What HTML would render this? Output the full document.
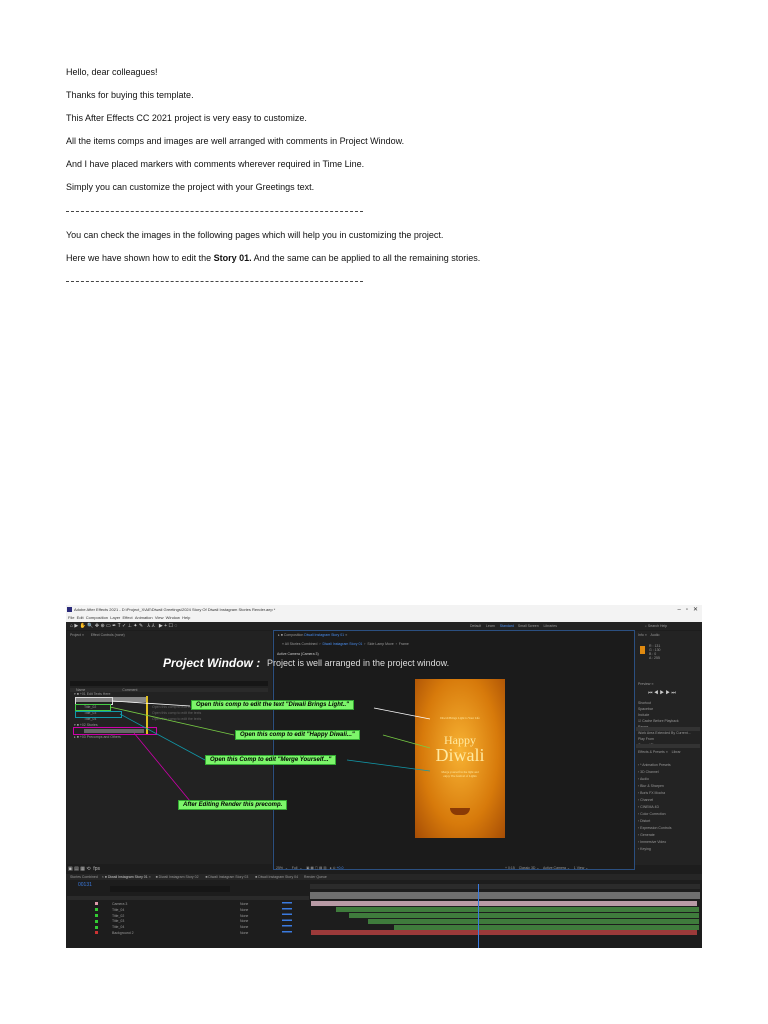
<!DOCTYPE html>
<html><head><meta charset="utf-8"><style>
body{margin:0;width:768px;height:1024px;background:#fff;position:relative;overflow:hidden;font-family:"Liberation Sans",sans-serif}
.t{position:absolute;left:66px;font-size:9px;color:#111;white-space:nowrap}
.a{position:absolute}
.s{position:absolute;font-size:3.5px;color:#999;white-space:nowrap}
.g{position:absolute;background:#7cf56a;border:1px solid #3a3;color:#000;font-size:6px;font-style:italic;font-weight:bold;white-space:nowrap;padding:1px 4px}
</style></head><body>
<div class="t" style="top:67px">Hello, dear colleagues!</div>
<div class="t" style="top:90px">Thanks for buying this template.</div>
<div class="t" style="top:113px">This After Effects CC 2021 project is very easy to customize.</div>
<div class="t" style="top:136px">All the items comps and images are well arranged with comments in Project Window.</div>
<div class="t" style="top:159px">And I have placed markers with comments wherever required in Time Line.</div>
<div class="t" style="top:182px">Simply you can customize the project with your Greetings text.</div>
<div class="a" style="left:66px;top:211px;width:297px;border-top:1px dashed #444"></div>
<div class="t" style="top:230px">You can check the images in the following pages which will help you in customizing the project.</div>
<div class="t" style="top:253px">Here we have shown how to edit the <b>Story 01.</b> And the same can be applied to all the remaining stories.</div>
<div class="a" style="left:66px;top:281px;width:297px;border-top:1px dashed #444"></div>

<div class="a" style="left:66px;top:605px;width:636px;height:17px;background:#f3f3f3;font-size:4px;color:#333">
 <div class="a" style="left:1px;top:2px;width:5px;height:5px;background:#2a2a7a"></div>
 <div class="a" style="left:8px;top:2px">Adobe After Effects 2021 - D:\Project_X\AE\Diwali Greetings\2024 Story Of Diwali Instagram Stories Render.aep *</div>
 <div class="a" style="left:2px;top:10px">File &nbsp;Edit &nbsp;Composition &nbsp;Layer &nbsp;Effect &nbsp;Animation &nbsp;View &nbsp;Window &nbsp;Help</div>
 <div class="a" style="right:4px;top:1px;font-size:6px">–&nbsp;&nbsp; ▫ &nbsp;&nbsp;✕</div>
</div>
<div class="a" style="left:66px;top:622px;width:636px;height:326px;background:#1d1d1d"></div>
<div class="a" style="left:66px;top:622px;width:636px;height:8px;background:#232323"></div>
<div class="s" style="left:70px;top:623px;font-size:5px;color:#ccc">⌂ ▶ ✋ 🔍 ✥ ⊕ ▭ ✒ T ✓ ⊥ ✦ ✎ &nbsp; ⅄ ⅄ &nbsp; ▶ + ☐ ◌</div>
<div class="s" style="left:470px;top:624px">Default &nbsp;&nbsp;&nbsp; Learn &nbsp;&nbsp;&nbsp; <span style="color:#4a8ef0">Standard</span> &nbsp;&nbsp; Small Screen &nbsp;&nbsp;&nbsp; Libraries</div>
<div class="s" style="left:645px;top:624px">⌕ Search Help</div>
<div class="a" style="left:67px;top:631px;width:205px;height:233px;background:#222"></div>
<div class="s" style="left:70px;top:633px">Project ≡ &nbsp;&nbsp;&nbsp;&nbsp;&nbsp; Effect Controls (none)</div>
<div class="a" style="left:70px;top:681px;width:198px;height:5px;background:#161616"></div>
<div class="a" style="left:70px;top:688px;width:198px;height:4px;background:#2a2a2a"></div>
<div class="s" style="left:76px;top:688px">Name &nbsp;&nbsp;&nbsp;&nbsp;&nbsp;&nbsp;&nbsp;&nbsp;&nbsp;&nbsp;&nbsp;&nbsp;&nbsp;&nbsp;&nbsp;&nbsp;&nbsp;&nbsp;&nbsp;&nbsp;&nbsp;&nbsp;&nbsp;&nbsp;&nbsp;&nbsp;&nbsp;&nbsp;&nbsp;&nbsp;&nbsp;&nbsp;&nbsp;&nbsp;&nbsp;&nbsp; Comment</div>
<div class="s" style="left:74px;top:692px">▾ ■ +01 Edit Texts Here</div>
<div class="a" style="left:76px;top:697px;width:70px;height:5px;background:#888"></div>
<div class="s" style="left:84px;top:705px">Title_02</div>
<div class="s" style="left:84px;top:711px">Title_03</div>
<div class="s" style="left:84px;top:717px">Title_04</div>
<div class="s" style="left:74px;top:723px">▾ ■ +02 Stories</div>
<div class="a" style="left:84px;top:729px;width:60px;height:4px;background:#666"></div>
<div class="s" style="left:74px;top:735px">▸ ■ +03 Precomps and Others</div>
<div class="s" style="left:152px;top:705px;color:#666">Open this comp to edit the texts</div>
<div class="s" style="left:152px;top:711px;color:#666">Open this comp to edit the texts</div>
<div class="s" style="left:152px;top:717px;color:#666">Open this comp to edit the texts</div>
<div class="a" style="left:75px;top:697px;width:36px;height:6px;border:1px solid #ddd"></div>
<div class="a" style="left:75px;top:704px;width:34px;height:5px;border:1px solid #4c4"></div>
<div class="a" style="left:75px;top:711px;width:45px;height:5px;border:1px solid #19a"></div>
<div class="a" style="left:73px;top:727px;width:82px;height:6px;border:1px solid #c0a"></div>
<div class="a" style="left:146px;top:696px;width:2px;height:38px;background:#e0c020"></div>
<div class="s" style="left:68px;top:866px;font-size:5px;color:#bbb">▣ ▤ ▦ ⟲ &nbsp;fps</div>

<div class="a" style="left:273px;top:630px;width:360px;height:238px;border:1px solid #2b4f80;background:#1b1b1b"></div>
<div class="s" style="left:278px;top:633px">▸ ■ Composition <span style="color:#4a8ef0">Diwali Instagram Story 01</span> ≡</div>
<div class="s" style="left:282px;top:642px">« All Stories Combined &nbsp;›&nbsp; <span style="color:#4a8ef0">Diwali Instagram Story 01</span> &nbsp;›&nbsp; Side Lamp Move &nbsp;›&nbsp; Frame</div>
<div class="s" style="left:277px;top:652px;color:#ccc">Active Camera (Camera 3)</div>
<div class="s" style="left:276px;top:866px">25% &nbsp;⌄ &nbsp;&nbsp; Full &nbsp;⌄ &nbsp;&nbsp; ▣ ▦ ▢ ▤ ▥ &nbsp; ● ⊙ <span style="color:#4a8ef0">+0.0</span></div>
<div class="s" style="left:505px;top:866px">+ 0:15 &nbsp;&nbsp; Classic 3D ⌄ &nbsp;&nbsp; Active Camera ⌄ &nbsp;&nbsp; 1 View ⌄</div>
<div class="a" style="left:415px;top:679px;width:90px;height:159px;background:radial-gradient(ellipse at 50% 45%,#f7b233,#d77a0b 60%,#a64d05)"></div>
<div class="a" style="left:415px;top:679px;width:90px;height:159px;font-family:'Liberation Serif',serif;color:#ffe9a0;text-align:center">
 <div style="margin-top:37px;font-size:3px">Diwali Brings Light to Your Life</div>
 <div style="margin-top:14px;font-size:12px;line-height:12px">Happy</div>
 <div style="font-size:18px;line-height:18px">Diwali</div>
 <div style="margin-top:6px;font-size:3px">Merge yourself in the light and<br>enjoy The festival of Lights</div>
 <div style="margin:30px auto 0;width:20px;height:7px;background:#8a3a05;border-radius:0 0 10px 10px"></div>
</div>
<div class="a" style="left:163px;top:656px;font-size:12px;font-weight:bold;font-style:italic;color:#fff;white-space:nowrap">Project Window :</div>
<div class="a" style="left:267px;top:658px;font-size:9px;color:#ddd;white-space:nowrap">Project is well arranged in the project window.</div>
<svg class="a" style="left:0;top:0" width="768" height="1024">
 <line x1="112" y1="701" x2="190" y2="706" stroke="#fff" stroke-width=".8"/>
 <line x1="374" y1="708" x2="430" y2="719" stroke="#fff" stroke-width=".8"/>
 <line x1="110" y1="707" x2="234" y2="735" stroke="#7c4" stroke-width=".8"/>
 <line x1="383" y1="735" x2="430" y2="748" stroke="#7c4" stroke-width=".8"/>
 <line x1="120" y1="714" x2="205" y2="760" stroke="#19a" stroke-width=".8"/>
 <line x1="347" y1="760" x2="430" y2="771" stroke="#19a" stroke-width=".8"/>
 <line x1="134" y1="733" x2="190" y2="801" stroke="#c0a" stroke-width=".8"/>
</svg>
<div class="g" style="left:191px;top:700px">Open this comp to edit the text "Diwali Brings Light.."</div>
<div class="g" style="left:235px;top:730px">Open this comp to edit "Happy Diwali..."</div>
<div class="g" style="left:205px;top:755px">Open this Comp to edit "Merge Yourself..."</div>
<div class="g" style="left:178px;top:800px">After Editing Render this precomp.</div>

<div class="a" style="left:635px;top:631px;width:66px;height:234px;background:#232323"></div>
<div class="s" style="left:638px;top:633px">Info ≡ &nbsp;&nbsp; Audio</div>
<div class="a" style="left:640px;top:646px;width:5px;height:8px;background:#e08a10"></div>
<div class="s" style="left:649px;top:644px;line-height:4px">R : 131<br>G : 130<br>B : 0<br>A : 255</div>
<div class="s" style="left:638px;top:682px">Preview ≡</div>
<div class="s" style="left:648px;top:690px;font-size:5px;color:#ccc">⏮ ◀ ▶ ▶ ⏭</div>
<div class="s" style="left:638px;top:700px;line-height:6px">Shortcut<br>Spacebar<br>Include<br>☑ Cache Before Playback<br>Range<br>Work Area Extended By Current...<br>Play From<br>Current Time</div>
<div class="a" style="left:636px;top:727px;width:64px;height:4px;background:#333"></div>
<div class="a" style="left:636px;top:744px;width:64px;height:4px;background:#333"></div>
<div class="s" style="left:638px;top:750px">Effects &amp; Presets ≡ &nbsp;&nbsp; Librar</div>
<div class="s" style="left:638px;top:762px;line-height:7px">› * Animation Presets<br>› 3D Channel<br>› Audio<br>› Blur &amp; Sharpen<br>› Boris FX Mocha<br>› Channel<br>› CINEMA 4D<br>› Color Correction<br>› Distort<br>› Expression Controls<br>› Generate<br>› Immersive Video<br>› Keying</div>

<div class="a" style="left:66px;top:874px;width:636px;height:6px;background:#262626"></div>
<div class="s" style="left:70px;top:875px">Stories Combined &nbsp;&nbsp; × ■ <span style="color:#ccc">Diwali Instagram Story 01</span> ≡ &nbsp;&nbsp;&nbsp; ■ Diwali Instagram Story 02 &nbsp;&nbsp;&nbsp;&nbsp;&nbsp; ■ Diwali Instagram Story 03 &nbsp;&nbsp;&nbsp;&nbsp;&nbsp; ■ Diwali Instagram Story 04 &nbsp;&nbsp;&nbsp;&nbsp; Render Queue</div>
<div class="a" style="left:78px;top:882px;font-size:5px;color:#3a7adf">00131</div>
<div class="a" style="left:110px;top:886px;width:120px;height:6px;background:#161616"></div>
<div class="a" style="left:310px;top:884px;width:390px;height:5px;background:#2b2b2b"></div>
<div class="a" style="left:310px;top:892px;width:390px;height:7px;background:#6f6f6f"></div>
<div class="a" style="left:67px;top:896px;width:242px;height:4px;background:#2a2a2a"></div>
<div class="s" style="left:112px;top:902px;line-height:5.8px">Camera 3<br>Title_04<br>Title_02<br>Title_03<br>Title_04<br>Background 2</div>
<div class="s" style="left:240px;top:902px;line-height:5.8px">None<br>None<br>None<br>None<br>None<br>None</div>
<div class="a" style="left:311px;top:901px;width:386px;height:5px;background:#b89aa5"></div>
<div class="a" style="left:336px;top:907px;width:363px;height:5px;background:#3f7b3c"></div>
<div class="a" style="left:349px;top:913px;width:350px;height:5px;background:#3f7b3c"></div>
<div class="a" style="left:368px;top:919px;width:331px;height:5px;background:#3f7b3c"></div>
<div class="a" style="left:394px;top:925px;width:305px;height:5px;background:#3f7b3c"></div>
<div class="a" style="left:311px;top:930px;width:386px;height:5px;background:#9c3a3a"></div>
<div class="a" style="left:478px;top:884px;width:1px;height:64px;background:#3a7adf"></div>
<div class="a" style="left:95px;top:902px;width:3px;height:3px;background:#d9a"></div>
<div class="a" style="left:95px;top:908px;width:3px;height:21px;background:repeating-linear-gradient(#3c3 0 3px,transparent 3px 6px)"></div>
<div class="a" style="left:95px;top:931px;width:3px;height:3px;background:#c33"></div>
<div class="a" style="left:282px;top:902px;width:10px;height:32px;background:repeating-linear-gradient(#3a7adf 0 1.5px,transparent 1.5px 5.8px)"></div>
</body></html>
